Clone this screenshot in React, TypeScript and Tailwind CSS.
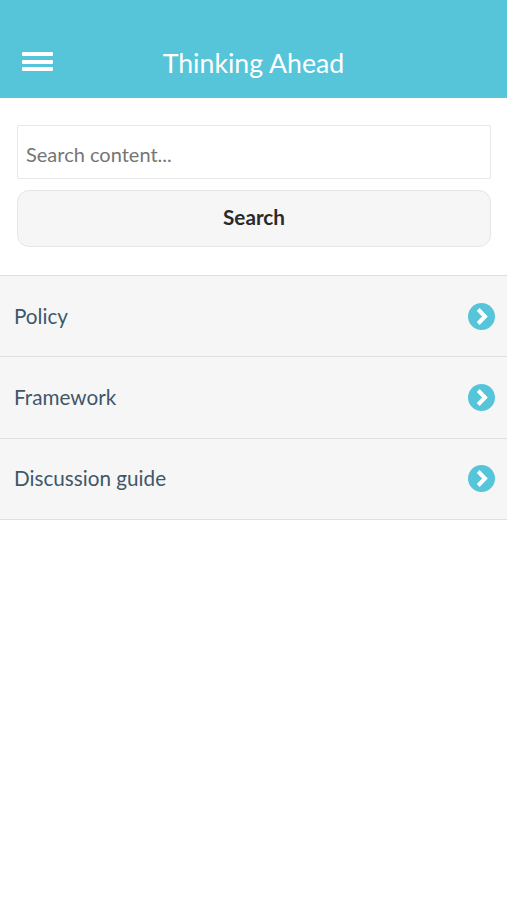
export default function App() {
  const rows = ["Policy", "Framework", "Discussion guide"];
  return (
    <div className="min-h-[900px] bg-white font-['Lato',sans-serif]">
      <header className="relative flex h-[98px] items-end bg-[#56c5da] pb-[19px]">
        <div className="ml-[22px] mb-[8px] flex w-[31px] flex-col gap-[3.5px]">
          <span className="h-[4px] rounded-[1px] bg-white" />
          <span className="h-[4px] rounded-[1px] bg-white" />
          <span className="h-[4px] rounded-[1px] bg-white" />
        </div>
        <h1 className="absolute inset-x-0 bottom-[17px] text-center text-[26.7px] leading-[36px] font-normal text-white">Thinking Ahead</h1>
      </header>
      <div className="flex flex-col gap-[11px] pl-[17px] pr-[16px] pt-[27px]">
        <div className="flex h-[54px] items-center rounded-[2px] border-[1.5px] border-[#e8e8e8] bg-white pl-[8px] pt-[3px] text-[20px] text-[#757575]">
          Search content...
        </div>
        <button className="h-[57px] rounded-[12px] border-[1.5px] border-[#e6e6e6] bg-[#f6f6f6] pb-[2px] text-[20.7px] font-bold text-[#2a2a2a]">
          Search
        </button>
      </div>
      <ul className="mt-[28px] border-t border-[#dedede]">
        {rows.map((r) => (
          <li key={r} className="flex h-[81.33px] items-center justify-between border-b border-[#e0e0e0] bg-[#f6f6f6] pl-[14px] pr-[12px]">
            <span className="text-[20.7px] text-[#3f5769]">{r}</span>
            <svg width="27" height="27" viewBox="0 0 27 27" aria-hidden="true">
              <circle cx="13.5" cy="13.5" r="13.5" fill="#56c5da" />
              <path d="M10.2 6.5 L17 13.5 L10.2 20.5" fill="none" stroke="#fff" strokeWidth="4" strokeLinejoin="miter" />
            </svg>
          </li>
        ))}
      </ul>
    </div>
  );
}
